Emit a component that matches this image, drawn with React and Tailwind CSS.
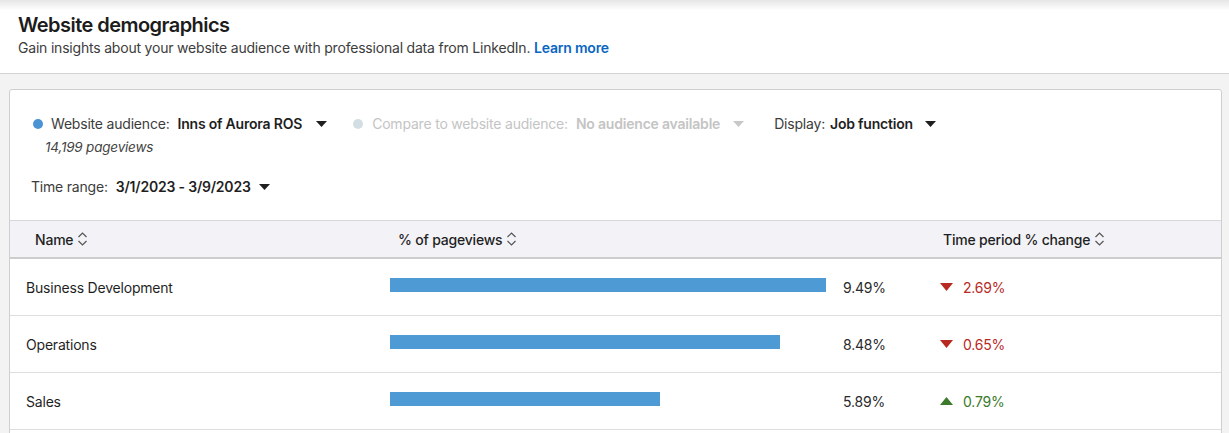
import React from 'react';

const ROWS = [
  { name: 'Business Development', width: 436, pct: '9.49%', change: '2.69%', up: false },
  { name: 'Operations', width: 390, pct: '8.48%', change: '0.65%', up: false },
  { name: 'Sales', width: 270, pct: '5.89%', change: '0.79%', up: true },
];

function Caret({ className = 'text-[#1f1f1f]' }) {
  return (
    <svg width="11" height="6" viewBox="0 0 11 6" className={className}>
      <path d="M0 0h11L5.5 6z" fill="currentColor" />
    </svg>
  );
}

function SortIcon() {
  return (
    <svg width="11" height="16" viewBox="0 0 11 16" className="text-[#555]">
      <path d="M1.5 6L5.5 2 9.5 6M1.5 10L5.5 14 9.5 10" fill="none" stroke="currentColor" strokeWidth="1.2" />
    </svg>
  );
}

function Triangle({ up }) {
  return (
    <svg width="13" height="8" viewBox="0 0 13 8" className={up ? 'text-[#3a7a28]' : 'text-[#b8291f]'}>
      <path d={up ? 'M0 8h13L6.5 0z' : 'M0 0h13L6.5 8z'} fill="currentColor" />
    </svg>
  );
}

export default function App() {
  return (
    <div className="w-[1229px] h-[433px] overflow-hidden bg-[#f3f3f3] text-[#1f1f1f] tracking-[-0.2px]" style={{ fontFamily: 'Inter, "Noto Sans", sans-serif' }}>
      <div className="h-[74px] bg-gradient-to-b from-[#e6e6e6] via-white via-[14%] to-white border-b border-[#d4d4d4] px-[18px] pt-[12px]">
        <h1 className="text-[20px] leading-[26px] font-semibold tracking-[-0.55px] text-[#1c1c1c]">Website demographics</h1>
        <p className="mt-[1px] text-[14px] leading-[18px] text-[#3c3c3c]">
          Gain insights about your website audience with professional data from LinkedIn.{' '}
          <span className="font-semibold text-[#0a66c2]">Learn more</span>
        </p>
      </div>

      <div className="mx-[9px] mt-[15px] w-[1213px] h-[400px] bg-white border border-[#cfcfcf] rounded-[3px]">
        <div className="pl-[21px] pt-[24px] h-[130px]">
          <div className="flex items-center text-[14px] leading-[20px]">
            <span className="w-[10px] h-[10px] rounded-full bg-[#4a94d4] ml-[2px] mr-[8px]" />
            <span className="text-[#3c3c3c]">Website audience:</span>
            <span className="ml-[8px] font-semibold">Inns of Aurora ROS</span>
            <span className="ml-[14px]"><Caret /></span>
            <span className="ml-[26px] w-[10px] h-[10px] rounded-full bg-[#d3dee4] mr-[9px]" />
            <span className="text-[#c4c4c4]">Compare to website audience:</span>
            <span className="ml-[8px] font-semibold text-[#c4c4c4]">No audience available</span>
            <span className="ml-[13px]"><Caret className="text-[#c8c8c8]" /></span>
            <span className="ml-[30px] text-[#3c3c3c]">Display:</span>
            <span className="ml-[5px] font-semibold">Job function</span>
            <span className="ml-[12px]"><Caret /></span>
          </div>
          <div className="mt-[4px] ml-[14px] text-[13.5px] leading-[18px] italic text-[#444]">14,199 pageviews</div>
          <div className="mt-[21px] flex items-center text-[14px] leading-[20px]">
            <span className="text-[#3c3c3c]">Time range:</span>
            <span className="ml-[8px] font-semibold">3/1/2023 - 3/9/2023</span>
            <span className="ml-[8px]"><Caret /></span>
          </div>
        </div>

        <div className="h-[39px] flex items-center bg-[#f3f3f7] border-t border-[#d8d8d8] border-b-2 border-b-[#cdcdcd] text-[14px] font-medium text-[#1f1f1f]">
          <div className="w-[379px] pl-[25px] flex items-center gap-[4px]">Name <SortIcon /></div>
          <div className="w-[554px] pl-[9px] flex items-center gap-[4px]">% of pageviews <SortIcon /></div>
          <div className="flex items-center gap-[4px]">Time period % change <SortIcon /></div>
        </div>

        {ROWS.map((r) => (
          <div key={r.name} className="h-[57px] flex items-center border-b border-[#dedede] text-[14px]">
            <div className="w-[380px] pl-[16px] text-[#1f1f1f]">{r.name}</div>
            <div className="w-[453px]">
              <div className="h-[14px] mb-[4px] bg-[#4e9ad4]" style={{ width: r.width }} />
            </div>
            <div className="w-[97px] text-[#2a2a2a]">{r.pct}</div>
            <div className={`flex items-center gap-[10px] ${r.up ? 'text-[#3a7a28]' : 'text-[#b8291f]'}`}>
              <Triangle up={r.up} />
              <span>{r.change}</span>
            </div>
          </div>
        ))}
      </div>
    </div>
  );
}
